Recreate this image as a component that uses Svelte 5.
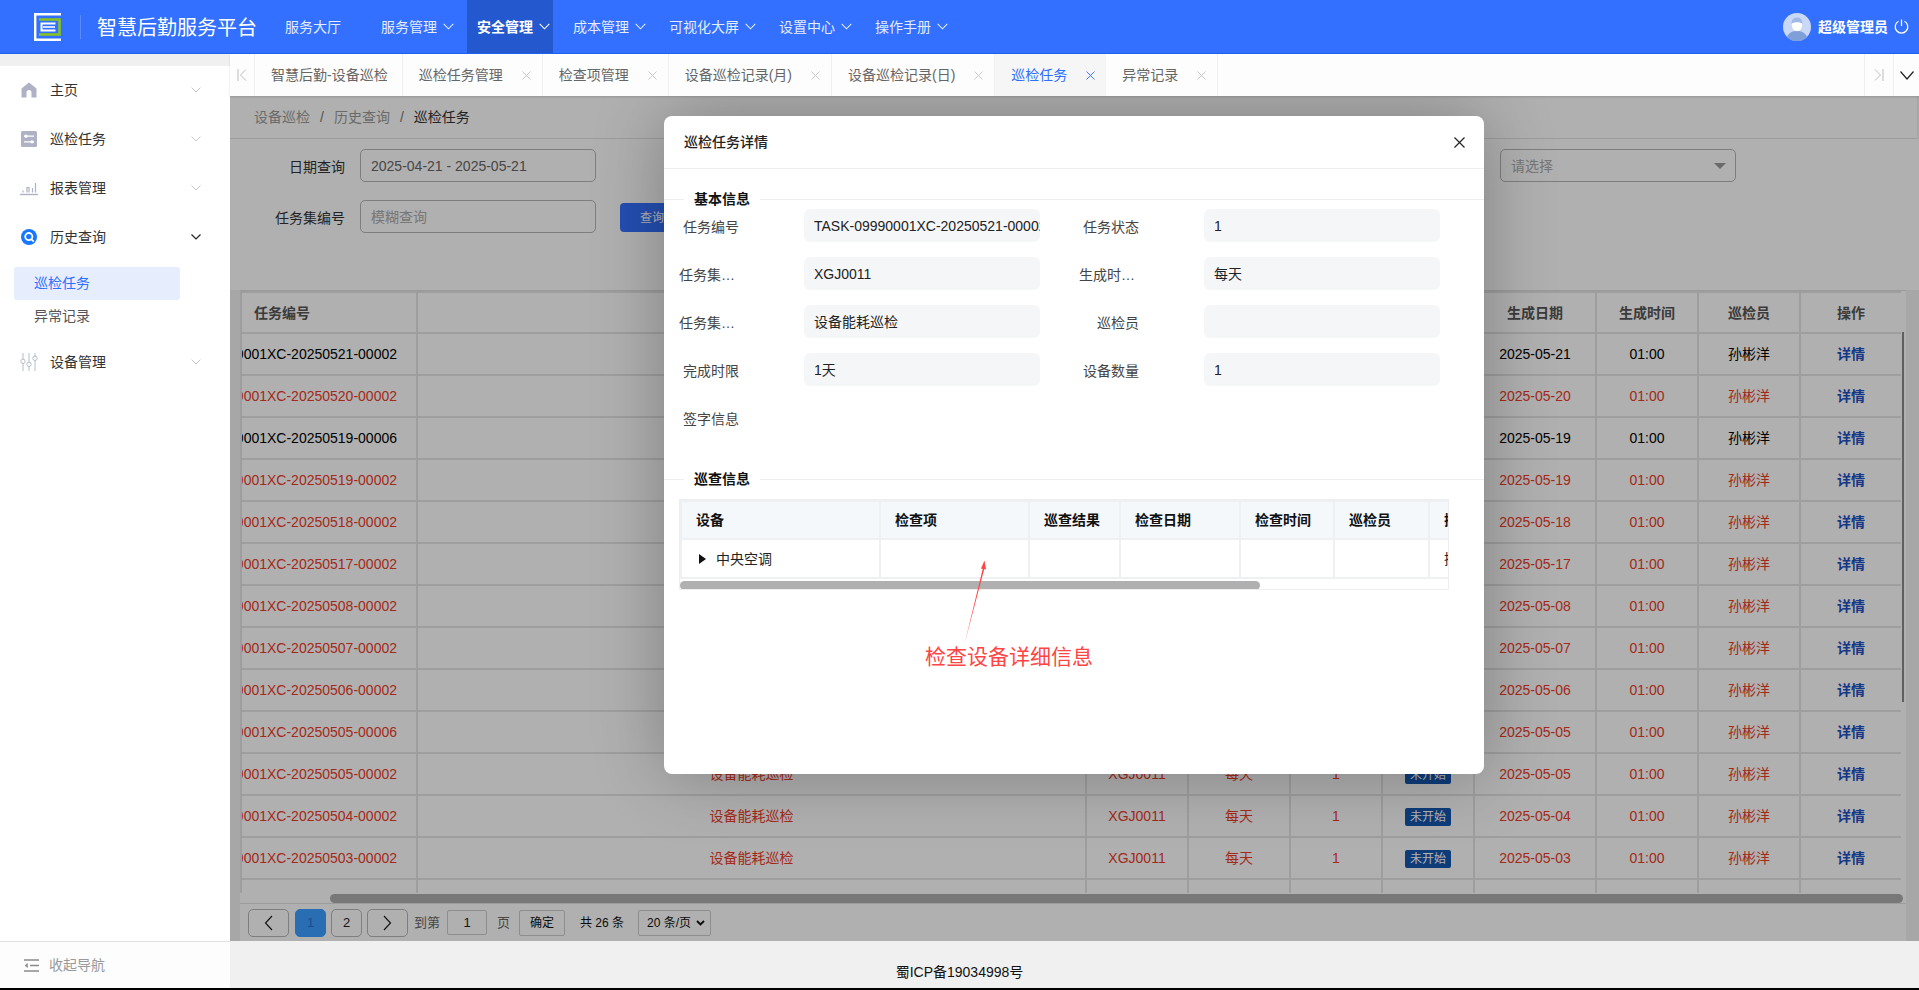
<script lang="ts">
  const navItems = [
    { label: '服务大厅', arrow: false },
    { label: '服务管理', arrow: true },
    { label: '安全管理', arrow: true, active: true },
    { label: '成本管理', arrow: true },
    { label: '可视化大屏', arrow: true },
    { label: '设置中心', arrow: true },
    { label: '操作手册', arrow: true }
  ];

  const tabs = [
    { label: '智慧后勤-设备巡检', fixed: true },
    { label: '巡检任务管理' },
    { label: '检查项管理' },
    { label: '设备巡检记录(月)' },
    { label: '设备巡检记录(日)' },
    { label: '巡检任务', active: true },
    { label: '异常记录' }
  ];

  // task rows: [code suffix, day, overdue (red) or not]
  const rows = [
    ['20250521-00002', '2025-05-21', false],
    ['20250520-00002', '2025-05-20', true],
    ['20250519-00006', '2025-05-19', false],
    ['20250519-00002', '2025-05-19', true],
    ['20250518-00002', '2025-05-18', true],
    ['20250517-00002', '2025-05-17', true],
    ['20250508-00002', '2025-05-08', true],
    ['20250507-00002', '2025-05-07', true],
    ['20250506-00002', '2025-05-06', true],
    ['20250505-00006', '2025-05-05', true],
    ['20250505-00002', '2025-05-05', true],
    ['20250504-00002', '2025-05-04', true],
    ['20250503-00002', '2025-05-03', true]
  ];

  const colWidths = [176, 669, 102, 102, 92, 92, 122, 102, 102, 102];
  const headers = ['任务编号', '任务集名称', '任务集编号', '生成时机', '设备数量', '任务状态', '生成日期', '生成时间', '巡检员', '操作'];

  const fields = [
    ['任务编号', 'TASK-09990001XC-20250521-00002', '任务状态', '1'],
    ['任务集编号', 'XGJ0011', '生成时机类型', '每天'],
    ['任务集名称', '设备能耗巡检', '巡检员', ''],
    ['完成时限', '1天', '设备数量', '1']
  ];

  const detailCols = [
    ['设备', 199],
    ['检查项', 149],
    ['巡查结果', 91],
    ['检查日期', 120],
    ['检查时间', 94],
    ['巡检员', 95],
    ['操作', 60]
  ];
</script>

<div class="page">
  <header class="topbar">
    <div class="logo">
      <svg width="28" height="28" viewBox="0 0 28 28" fill="none">
        <path d="M27 1.2H1.2V26.800H27" stroke="#fff" stroke-width="2.400" />
        <path d="M5 6.500H25.500V21.500H5" stroke="#8cc21a" stroke-width="2.600" />
        <path d="M21.500 10.500H7.500V17.500H21.500" stroke="#fff" stroke-width="2" />
        <path d="M9 14H21" stroke="#fff" stroke-width="1.600" />
      </svg>
    </div>
    <span class="logo-sep"></span>
    <span class="brand">智慧后勤服务平台</span>
    <nav class="nav">
      {#each navItems as item}
        <div class="nav-item" class:active={item.active}>
          <span>{item.label}</span>
          {#if item.arrow}
            <svg class="nav-arrow" width="11" height="7" viewBox="0 0 11 7" fill="none">
              <path d="M.7.8 5.500 5.800 10.300.8" stroke="currentColor" stroke-width="1.100" />
            </svg>
          {/if}
        </div>
      {/each}
    </nav>
    <div class="user">
      <svg class="avatar" width="28" height="28" viewBox="0 0 28 28">
        <circle cx="14" cy="14" r="14" fill="#c9d9f5" />
        <path d="M4 24c2-5 6-6 10-6s8 1 10 6a14 14 0 0 1-20 0z" fill="#7f9fd8" />
        <ellipse cx="14" cy="12" rx="5.200" ry="6.200" fill="#fff" />
        <path d="M8.500 11c0-5 2.500-6.500 5.500-6.500s5.500 1.500 5.500 6.500c-1.500-2.500-9.500-2.500-11 0z" fill="#9fb8e4" />
      </svg>
      <span class="user-name">超级管理员</span>
      <svg class="power" width="15" height="15" viewBox="0 0 15 15" fill="none" stroke="#fff" stroke-width="1.200">
        <path d="M4.500 2.200a6.300 6.300 0 1 0 6 0" />
        <path d="M7.500.5V7" />
      </svg>
    </div>
  </header>

  <div class="body">
    <aside class="sidebar">
      <div class="side-top"></div>
      <div class="side-menu">
        <div class="side-item">
          <svg width="16" height="16" viewBox="0 0 16 16"><path d="M8 .5 15.500 6.500V15.500H10.500V10.500A2.500 2.500 0 0 0 5.500 10.500V15.500H.5V6.500z" fill="#aeb2c4" /></svg>
          <span>主页</span>
          <svg class="side-arrow" width="10" height="6" viewBox="0 0 10 6" fill="none"><path d="M.5.5 5 5 9.500.5" stroke="#c8c8c8" /></svg>
        </div>
        <div class="side-item">
          <svg width="16" height="16" viewBox="0 0 16 16">
            <rect width="16" height="16" rx="1.500" fill="#aeb2c4" />
            <path d="M3 5.200H13M3 10.800H13" stroke="#fff" stroke-width="1.200" />
            <circle cx="5" cy="5.200" r="1.600" fill="#fff" />
            <circle cx="11" cy="10.800" r="1.600" fill="#fff" />
          </svg>
          <span>巡检任务</span>
          <svg class="side-arrow" width="10" height="6" viewBox="0 0 10 6" fill="none"><path d="M.5.5 5 5 9.500.5" stroke="#c8c8c8" /></svg>
        </div>
        <div class="side-item">
          <svg class="wide-icon" width="18" height="16" viewBox="0 0 18 16" fill="none" stroke="#aeb2c4">
            <path d="M0 14.500H18" stroke-width="1.400" />
            <path d="M3 12.500V10.500M7 12.500V7.500H9V12.500M12.500 12.500V8M15.500 12.500V3" stroke-width="1.200" />
          </svg>
          <span>报表管理</span>
          <svg class="side-arrow" width="10" height="6" viewBox="0 0 10 6" fill="none"><path d="M.5.5 5 5 9.500.5" stroke="#c8c8c8" /></svg>
        </div>
        <div class="side-item open">
          <svg width="16" height="16" viewBox="0 0 16 16">
            <circle cx="8" cy="8" r="8" fill="#1677ff" />
            <circle cx="7.800" cy="7.600" r="3.600" fill="none" stroke="#fff" stroke-width="1.800" />
            <path d="M10.200 10.200 12.800 12.600" stroke="#fff" stroke-width="1.800" />
          </svg>
          <span>历史查询</span>
          <svg class="side-arrow" width="10" height="6" viewBox="0 0 10 6" fill="none"><path d="M.5.5 5 5 9.500.5" stroke="#222" stroke-width="1.200" /></svg>
        </div>
        <div class="side-sub">
          <div class="sub-item active">巡检任务</div>
          <div class="sub-item">异常记录</div>
        </div>
        <div class="side-item">
          <svg class="wide-icon" width="18" height="18" viewBox="0 0 18 18" fill="none" stroke="#b8bccb">
            <path d="M3 0V6.500M3 10V18M9 0V9.500M9 13V18M15 0V3.500M15 7V18" />
            <circle cx="3" cy="8.300" r="2.200" />
            <circle cx="9" cy="11.300" r="2.200" />
            <circle cx="15" cy="5.300" r="2.200" />
          </svg>
          <span>设备管理</span>
          <svg class="side-arrow" width="10" height="6" viewBox="0 0 10 6" fill="none"><path d="M.5.5 5 5 9.500.5" stroke="#c8c8c8" /></svg>
        </div>
      </div>
      <div class="side-foot">
        <svg width="15" height="13" viewBox="0 0 15 13" fill="none" stroke="#8b8b8b" stroke-width="1.400">
          <path d="M0 1H15M6 6.500H15M0 12H15" />
          <path d="M3.500 4.500 1 6.500 3.500 8.500z" fill="#8b8b8b" stroke-width=".6" />
        </svg>
        <span>收起导航</span>
      </div>
    </aside>

    <main class="main">
      <div class="tabbar">
        <div class="tab-ctl">
          <svg width="10" height="12" viewBox="0 0 10 12" fill="none" stroke="#bdbdbd"><path d="M1 0V12M9 .5 3.500 6 9 11.500" /></svg>
        </div>
        <div class="tabs">
          {#each tabs as tab}
            <div class="tab" class:active={tab.active} class:fixed={tab.fixed}>
              <span>{tab.label}</span>
              {#if !tab.fixed}
                <svg class="tab-close" width="9" height="9" viewBox="0 0 9 9" stroke="currentColor" stroke-width=".9"><path d="M.5.5 8.500 8.500M8.500.5.5 8.500" /></svg>
              {/if}
            </div>
          {/each}
        </div>
        <div class="tab-ctl right">
          <svg width="10" height="12" viewBox="0 0 10 12" fill="none" stroke="#bdbdbd"><path d="M9 0V12M1 .5 6.500 6 1 11.500" /></svg>
        </div>
        <div class="tab-ctl last">
          <svg width="14" height="9" viewBox="0 0 14 9" fill="none" stroke="#222" stroke-width="1.200"><path d="M.5.5 7 8 13.500.5" /></svg>
        </div>
      </div>

      <section class="content">
        <div class="crumbs">
          <span class="crumb">设备巡检</span><i>/</i><span class="crumb">历史查询</span><i>/</i><span class="crumb now">巡检任务</span>
        </div>

        <form class="filters">
          <div class="field">
            <span class="f-label">日期查询</span>
            <div class="f-input value">2025-04-21 - 2025-05-21</div>
          </div>
          <div class="field">
            <span class="f-label">任务集名称</span>
            <div class="f-input">模糊查询</div>
          </div>
          <div class="field">
            <span class="f-label"></span>
            <div class="f-input select">请选择<span class="caret"></span></div>
          </div>
          <div class="field">
            <span class="f-label">任务集编号</span>
            <div class="f-input">模糊查询</div>
            <button type="button" class="query">查询</button>
          </div>
        </form>

        <div class="grid-wrap">
          <div class="grid-main">
            <div class="grid-clip">
              <table class="grid">
                <colgroup>
                  {#each colWidths as w}<col style="width:{w}px" />{/each}
                </colgroup>
                <thead>
                  <tr>
                    {#each headers as h, i}
                      <th class:left={i === 0}>{h}</th>
                    {/each}
                  </tr>
                </thead>
                <tbody>
                  {#each rows as [code, day, late]}
                    <tr class:late>
                      <td class="code"><span>TASK-09990001XC-{code}</span></td>
                      <td>设备能耗巡检</td>
                      <td>XGJ0011</td>
                      <td>每天</td>
                      <td>1</td>
                      <td><span class="badge">未开始</span></td>
                      <td>{day}</td>
                      <td>01:00</td>
                      <td>孙彬洋</td>
                      <td><a class="link" href="#detail">详情</a></td>
                    </tr>
                  {/each}
                  <tr>
                    {#each colWidths as w}<td></td>{/each}
                  </tr>
                </tbody>
              </table>
            </div>
            <div class="vbar"><span class="vthumb"></span></div>
          </div>
          <div class="hbar"><span class="hthumb"></span></div>
        </div>

        <div class="pager">
          <button type="button" class="pg wide">
            <svg width="9" height="16" viewBox="0 0 9 16" fill="none" stroke="#222" stroke-width="1.200"><path d="M8 1 1.500 8 8 15" /></svg>
          </button>
          <button type="button" class="pg on">1</button>
          <button type="button" class="pg">2</button>
          <button type="button" class="pg wide">
            <svg width="9" height="16" viewBox="0 0 9 16" fill="none" stroke="#222" stroke-width="1.200"><path d="M1 1 7.500 8 1 15" /></svg>
          </button>
          <span class="pg-text">到第</span>
          <span class="pg-box">1</span>
          <span class="pg-text">页</span>
          <span class="pg-ok">确定</span>
          <span class="pg-total">共 26 条</span>
          <span class="pg-size">20 条/页
            <svg width="9" height="6" viewBox="0 0 9 6" fill="none" stroke="#111" stroke-width="1.800"><path d="M1 1 4.500 4.500 8 1" /></svg>
          </span>
        </div>

        <div class="mask"></div>

        <div class="dialog">
          <div class="dlg-head">
            <span>巡检任务详情</span>
            <svg width="11" height="11" viewBox="0 0 11 11" stroke="#222" stroke-width="1.200"><path d="M.5.5 10.500 10.500M10.500.5.5 10.500" /></svg>
          </div>

          <div class="legend first"><span>基本信息</span></div>
          <div class="form">
            {#each fields as [l1, v1, l2, v2]}
              <div class="form-row">
                <span class="d-label">{l1}</span>
                <div class="d-value">{v1}</div>
                <span class="d-label second">{l2}</span>
                <div class="d-value">{v2}</div>
              </div>
            {/each}
            <div class="form-row">
              <span class="d-label">签字信息</span>
            </div>
          </div>

          <div class="legend"><span>巡查信息</span></div>
          <div class="detail">
            <table class="d-table">
              <colgroup>
                {#each detailCols as [, w]}<col style="width:{w}px" />{/each}
              </colgroup>
              <thead>
                <tr>
                  {#each detailCols as [name]}<th>{name}</th>{/each}
                </tr>
              </thead>
              <tbody>
                <tr>
                  <td><span class="tree-arrow"></span>中央空调</td>
                  <td></td>
                  <td></td>
                  <td></td>
                  <td></td>
                  <td></td>
                  <td>操作</td>
                </tr>
              </tbody>
            </table>
            <div class="d-bar"><span class="d-thumb"></span></div>
          </div>

          <!-- red annotation drawn over the dialog -->
          <svg class="note-arrow" width="24" height="84" viewBox="0 0 24 84">
            <path d="M.6 83.500 18.700 9 17 8.600 20.500.5 22 9.500 20.200 9.200z" fill="#ff4444" />
          </svg>
          <span class="note">检查设备详细信息</span>
        </div>
      </section>

      <footer class="beian">蜀ICP备19034998号</footer>
    </main>
  </div>
</div>

<style>
  :global(body) {
    margin: 0;
    background: #000;
  }

  .page {
    height: 988px;
    width: 1919px;
    display: flex;
    flex-direction: column;
    overflow: hidden;
    font-family: "Liberation Sans", "Noto Sans CJK SC", sans-serif;
    font-size: 14px;
    line-height: 20px;
    color: #222;
    background: #f0f0f0;
    border-bottom: 2px solid #000;
  }

  .topbar {
    height: 53px;
    flex: none;
    display: flex;
    align-items: center;
    background: #3370ff;
    border-bottom: 1px solid #1f62f0;
    color: #fff;
  }

  .logo {
    margin-left: 34px;
    width: 28px;
    height: 28px;
    display: flex;
  }

  .logo-sep {
    width: 1px;
    height: 24px;
    margin-left: 18px;
    background: #5a8cff;
  }

  .brand {
    margin-left: 16px;
    font-size: 20px;
    line-height: normal;
    width: 178px;
    white-space: nowrap;
  }

  .nav {
    display: flex;
    gap: 10px;
    align-self: stretch;
    color: #e4ecff;
  }

  .nav-item {
    min-width: 73px;
    padding: 0 3px 0 10px;
    display: flex;
    align-items: center;
    white-space: nowrap;
  }

  .nav-item.active {
    background: #2358cf;
    color: #fff;
    font-weight: 700;
  }

  .nav-arrow {
    margin-left: 6px;
  }

  .user {
    margin-left: auto;
    margin-right: 10px;
    display: flex;
    align-items: center;
  }

  .user-name {
    margin: 0 6px 0 7px;
    font-weight: 700;
    white-space: nowrap;
  }

  .power {
    flex: none;
  }

  .body {
    flex: 1;
    min-height: 0;
    display: flex;
  }

  .sidebar {
    width: 230px;
    flex: none;
    display: flex;
    flex-direction: column;
    background: #fff;
  }

  .side-top {
    height: 12px;
    background: #f0f0f0;
  }

  .side-menu {
    flex: 1;
  }

  .side-item {
    height: 49px;
    box-sizing: border-box;
    padding: 0 29px 1px 21px;
    display: flex;
    align-items: center;
  }

  .side-item > span {
    margin-left: 13px;
    color: #333;
  }

  .wide-icon {
    margin: 0 -1px;
  }

  .side-arrow {
    margin-left: auto;
  }

  .side-sub {
    padding: 5px 0;
  }

  .sub-item {
    width: 146px;
    height: 33px;
    margin-left: 14px;
    padding-left: 20px;
    line-height: 33px;
    color: #555;
    border-radius: 3px;
  }

  .sub-item.active {
    background: #e6edfd;
    color: #2f6fff;
  }

  .side-foot {
    height: 47px;
    flex: none;
    box-sizing: border-box;
    padding-left: 24px;
    display: flex;
    align-items: center;
    gap: 10px;
    border-top: 1px solid #e2e2e2;
    background: #fdfdfd;
    color: #999;
  }

  .main {
    flex: 1;
    min-width: 0;
    display: flex;
    flex-direction: column;
  }

  .tabbar {
    height: 42px;
    flex: none;
    display: flex;
    background: #fdfdfd;
    position: relative;
    z-index: 3;
    box-shadow: 0 1px 2px rgba(0, 0, 0, .15);
    color: #666;
  }

  .tab-ctl {
    width: 25px;
    flex: none;
    box-sizing: border-box;
    display: flex;
    align-items: center;
    justify-content: center;
    border-right: 1px solid #f0f0f0;
  }

  .tab-ctl.right {
    width: 30px;
    border-left: 1px solid #f0f0f0;
  }

  .tab-ctl.last {
    width: 25px;
    border: 0;
  }

  .tabs {
    flex: 1;
    display: flex;
  }

  .tab {
    display: flex;
    align-items: center;
    padding: 0 11px 0 16px;
    white-space: nowrap;
    border-right: 1px solid #f0f0f0;
  }

  .tab.fixed {
    padding-right: 14px;
  }

  .tab.active {
    background: #f6f6f6;
    color: #2f6fff;
    border-right: 0;
  }

  .tab-close {
    margin-left: 19px;
    color: #c4c4c4;
  }

  .tab.active .tab-close {
    color: #2f6fff;
  }

  .content {
    flex: 1;
    min-height: 0;
    position: relative;
    overflow: hidden;
    background: #f0f0f0;
  }

  .crumbs {
    height: 42px;
    margin-right: 2px;
    padding-left: 24px;
    display: flex;
    align-items: center;
    background: #fcfcfc;
    border-bottom: 1px solid #e0e0e0;
    color: #999;
  }

  .crumbs i {
    margin: 0 10px;
    font-style: normal;
    color: #777;
  }

  .crumb.now {
    color: #333;
  }

  .filters {
    height: 151px;
    box-sizing: border-box;
    padding-top: 10px;
    display: grid;
    grid-template-columns: repeat(3, 570px);
    grid-auto-rows: 33px;
    row-gap: 18px;
    align-content: start;
    background: #fcfcfc;
  }

  .field {
    display: flex;
    align-items: center;
  }

  .f-label {
    width: 115px;
    margin: 2px 15px 0 0;
    text-align: right;
    color: #333;
  }

  .f-input {
    width: 236px;
    height: 33px;
    box-sizing: border-box;
    padding: 0 10px;
    display: flex;
    align-items: center;
    position: relative;
    border: 1px solid #b5b5b8;
    border-radius: 5px;
    color: #aaa;
  }

  .f-input.value {
    color: #666;
  }

  .caret {
    position: absolute;
    right: 9px;
    top: 13px;
    width: 0;
    height: 0;
    border: 6px solid transparent;
    border-top: 6px solid #999;
    border-bottom: 0;
  }

  .query {
    width: 64px;
    height: 29px;
    margin: 2px 0 0 24px;
    border: 0;
    border-radius: 4px;
    background: #3370ff;
    color: #fff;
    font: inherit;
    font-size: 12px;
  }

  .grid-wrap {
    margin: 0 13px 0 10px;
    height: 613px;
    display: flex;
    flex-direction: column;
    background: #fcfcfc;
    border-top: 1px solid #ddd;
    box-sizing: border-box;
  }

  .grid-main {
    flex: 1;
    min-height: 0;
    display: flex;
  }

  .grid-clip {
    flex: 1;
    min-width: 0;
    overflow: hidden;
  }

  .grid {
    table-layout: fixed;
    width: 1661px;
    border-collapse: collapse;
  }

  .grid th,
  .grid td {
    height: 42px;
    box-sizing: border-box;
    padding: 0;
    border: 2px solid #e2e2e2;
    text-align: center;
    overflow: hidden;
    white-space: nowrap;
    color: #000;
    font-weight: 400;
  }

  .grid th {
    height: 41px;
    color: #555;
    font-weight: 700;
  }

  .grid th.left {
    text-align: left;
    padding-left: 12px;
  }

  .grid tr.late td {
    color: #eb3b28;
  }

  /* first column is scrolled: the code sticks to the right and is cut on the left */
  .grid td.code {
    direction: rtl;
    text-align: left;
  }

  .grid td.code span {
    display: inline-block;
    margin-right: 19px;
    direction: ltr;
    unicode-bidi: embed;
  }

  .badge {
    display: inline-block;
    padding: 0 5px;
    height: 18px;
    line-height: 18px;
    font-size: 12px;
    border-radius: 2px;
    background: #1456ae;
    color: #fff;
  }

  .grid tr.late td .badge {
    color: #fff;
  }

  .link {
    color: #1f4fc0;
    font-weight: 700;
    text-decoration: none;
  }

  .grid tr.late td .link {
    color: #1f4fc0;
  }

  .vbar {
    width: 5px;
    flex: none;
    padding-top: 41px;
    box-sizing: border-box;
  }

  .vthumb {
    display: block;
    width: 2px;
    height: 370px;
    margin-left: 1px;
    background: #888;
  }

  .hbar {
    height: 10px;
    flex: none;
  }

  .hthumb {
    display: block;
    height: 9px;
    margin: 1px 3px 0 90px;
    border-radius: 5px;
    background: #adadad;
  }

  .pager {
    height: 38px;
    margin: 0 13px 0 10px;
    padding-left: 8px;
    display: flex;
    align-items: center;
    background: #fcfcfc;
    border-top: 1px solid #e0e0e0;
    box-sizing: border-box;
    font-size: 13px;
  }

  .pg {
    width: 31px;
    height: 28px;
    padding: 0;
    margin-right: 5px;
    display: flex;
    align-items: center;
    justify-content: center;
    border: 1px solid #b5b5b5;
    border-radius: 5px;
    background: transparent;
    color: #222;
    font: inherit;
  }

  .pg.wide {
    width: 41px;
    margin-right: 6px;
  }

  .pg.on {
    background: #3c9cff;
    border-color: #3c9cff;
    color: #2f6fd0;
  }

  .pg-text {
    color: #666;
    font-size: 13px;
  }

  .pg-box {
    width: 40px;
    height: 25px;
    margin: 0 10px 0 7px;
    display: flex;
    align-items: center;
    justify-content: center;
    box-sizing: border-box;
    border: 1px solid #ccc;
    border-radius: 2px;
  }

  .pg-ok {
    width: 46px;
    height: 26px;
    margin-left: 9px;
    display: flex;
    align-items: center;
    justify-content: center;
    box-sizing: border-box;
    border: 1px solid #ccc;
    border-radius: 2px;
    color: #111;
    font-size: 12px;
  }

  .pg-total {
    margin-left: 15px;
    color: #111;
    font-size: 12px;
  }

  .pg-size {
    width: 73px;
    height: 26px;
    margin-left: 14px;
    padding-left: 8px;
    display: flex;
    align-items: center;
    gap: 5px;
    box-sizing: border-box;
    border: 1px solid #ccc;
    border-radius: 2px;
    color: #111;
    white-space: nowrap;
    font-size: 12px;
  }

  .mask {
    position: absolute;
    inset: 0;
    background: rgba(0, 0, 0, .3);
  }

  .dialog {
    position: absolute;
    left: 434px;
    top: 20px;
    width: 820px;
    height: 658px;
    background: #fff;
    border-radius: 8px;
    box-shadow: 0 0 70px rgba(0, 0, 0, .28);
  }

  .dlg-head {
    height: 52px;
    box-sizing: content-box;
    padding: 0 19px 0 20px;
    display: flex;
    align-items: center;
    justify-content: space-between;
    border-bottom: 1px solid #eeeff1;
    font-weight: 500;
    color: #222;
  }

  .dlg-head span {
    margin-bottom: 1px;
  }

  .legend {
    height: 0;
    border-top: 1px solid #eceef0;
    position: relative;
  }

  .legend span {
    position: absolute;
    left: 20px;
    top: -11px;
    padding: 0 10px;
    line-height: 20px;
    background: #fff;
    font-weight: 700;
    color: #111;
  }

  .legend.first {
    margin-top: 30px;
  }

  .form {
    padding-top: 9px;
    height: 279px;
    box-sizing: border-box;
  }

  .form-row {
    height: 33px;
    margin-bottom: 15px;
    display: flex;
    align-items: center;
  }

  .d-label {
    width: 60px;
    margin-left: 15px;
    line-height: normal;
    text-align: right;
    white-space: nowrap;
    overflow: hidden;
    text-overflow: ellipsis;
    color: #444;
  }

  .d-label.second {
    margin-left: 39px;
  }

  .d-value {
    width: 236px;
    height: 33px;
    box-sizing: border-box;
    margin-left: 65px;
    padding: 0 10px;
    line-height: 35px;
    background: #f5f6f8;
    border-radius: 6px;
    white-space: nowrap;
    overflow: hidden;
    color: #222;
  }

  .detail {
    margin: 19px 0 0 15px;
    width: 770px;
    height: 91px;
    border: 1px solid #eceef0;
    box-sizing: border-box;
    overflow: hidden;
  }

  .d-table {
    table-layout: fixed;
    width: 808px;
    border-collapse: collapse;
  }

  .d-table th,
  .d-table td {
    height: 39px;
    padding: 0 0 0 14px;
    box-sizing: border-box;
    border: 2px solid #eef0f2;
    text-align: left;
    white-space: nowrap;
    overflow: hidden;
    color: #222;
  }

  .d-table th {
    height: 38px;
    background: #f5f8fb;
    font-weight: 700;
    color: #111;
  }

  .tree-arrow {
    display: inline-block;
    width: 0;
    height: 0;
    margin: 0 10px 0 3px;
    border-left: 7px solid #111;
    border-top: 5px solid transparent;
    border-bottom: 5px solid transparent;
  }

  .d-bar {
    height: 10px;
    margin-top: 2px;
  }

  .d-thumb {
    display: block;
    width: 580px;
    height: 9px;
    border-radius: 5px;
    background: #b0b0b0;
  }

  .note-arrow {
    position: absolute;
    left: 300px;
    top: 444px;
  }

  .note {
    position: absolute;
    left: 261px;
    top: 527px;
    font-size: 21px;
    line-height: 28px;
    color: #ff4444;
    white-space: nowrap;
  }

  .beian {
    height: 47px;
    flex: none;
    display: flex;
    align-items: center;
    justify-content: center;
    background: #f0f0f0;
    color: #111;
    padding: 14px 230px 0 0;
    box-sizing: border-box;
  }
</style>
